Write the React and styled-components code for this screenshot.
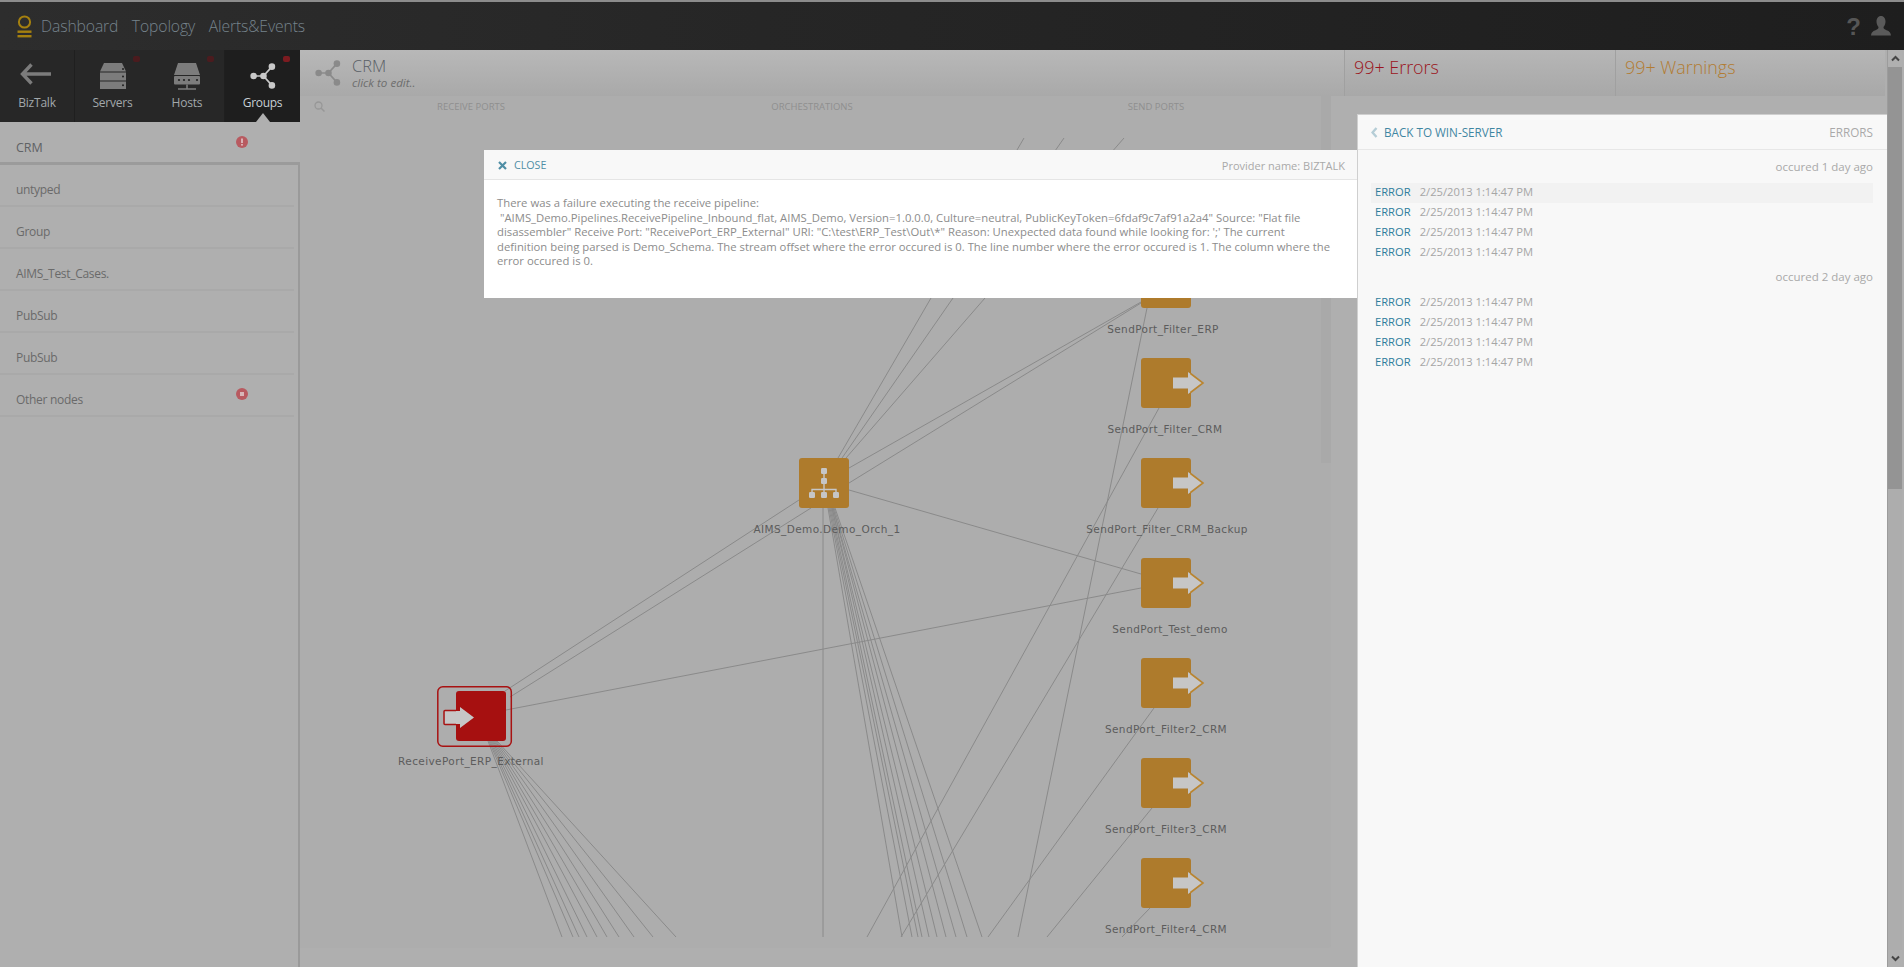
import React from "react";
import styled, { createGlobalStyle } from "styled-components";

const Global = createGlobalStyle`
  html, body { margin: 0; padding: 0; height: 100%; overflow: hidden; background: #afafaf; }
  body { font-family: "Open Sans", "Liberation Sans", sans-serif; }
  * { box-sizing: border-box; }
`;

const Page = styled.div`
  position: relative; width: 1904px; height: 967px; display: flex; flex-direction: column; overflow: hidden; background: #afafaf;
`;

/* header */
const Header = styled.header`
  height: 50px; flex: none; display: flex; align-items: center; padding: 0 13px 0 17px;
  border-top: 2px solid #8c8c8c;
  background: linear-gradient(90deg, #2d2d2d 0%, #262626 40%, #1e1e1e 100%);
`;
const Logo = styled.svg` width: 15px; height: 23px; margin-right: 9px; flex: none; `;
const TopNav = styled.nav` display: flex; gap: 13.5px; flex: 1; `;
const TopLink = styled.span`
  font-size: 15.7px; font-weight: 300; color: #76838c; letter-spacing: -0.1px; line-height: 24px;
`;
const HeaderIcons = styled.div` display: flex; align-items: center; gap: 10px; `;
const HelpMark = styled.span`
  font-family: "Liberation Sans", sans-serif; font-size: 24px; font-weight: 700; color: #565656; line-height: 26px; padding-top: 2px;
`;

const Body = styled.div` flex: 1; display: flex; min-height: 0; `;

/* left */
const Sidebar = styled.aside` width: 300px; flex: none; display: flex; flex-direction: column; `;
const Tabs = styled.div` height: 72px; display: flex; flex: none; background: #262626; `;
const Tab = styled.div`
  position: relative; width: 75px; display: flex; flex-direction: column; align-items: center;
  background: ${p => (p.$active ? "#1e1e1e" : "#272727")};
  border-right: ${p => (p.$divider ? "1px solid #1f1f1f" : "none")};
`;
const TabIcon = styled.svg` width: 34px; height: 30px; margin-top: 11px; flex: none; `;
const TabLabel = styled.span`
  margin-top: 3px; font-size: 12px; line-height: 18px; letter-spacing: ${p => (p.$active ? "-0.3px" : "-0.2px")};
  color: ${p => (p.$active ? "#c8d0d4" : "#a2a8ab")};
`;
const TabBadge = styled.i`
  position: absolute; top: 6px; right: 10px; width: 7px; height: 6px; border-radius: 2px;
  background: ${p => (p.$active ? "#7c1b20" : "#4b1b1e")};
`;
const TabPointer = styled.i`
  position: absolute; bottom: 0; left: 50%; margin-left: -7px; width: 0; height: 0;
  border-left: 7px solid transparent; border-right: 7px solid transparent; border-bottom: 9px solid #afafaf;
`;
const ActiveRow = styled.div`
  height: 43px; flex: none; position: relative; display: flex; align-items: center; padding: 11px 0 0 16px;
  border-bottom: 3px solid #9b9b9b;
  font-size: 12.5px; color: #5f6265; letter-spacing: -0.1px;
`;
const RowList = styled.div`
  flex: 1; border-right: 2px solid #9a9a9a; display: flex; flex-direction: column;
`;
const GroupRow = styled.div`
  height: 42px; flex: none; position: relative; display: flex; align-items: center; padding: 8px 0 0 16px;
  margin-right: 4px; border-bottom: 2px solid #a9a9a9;
  font-size: 12px; color: #6a6a6a; letter-spacing: -0.3px;
`;
const Alert = styled.svg` position: absolute; left: 236px; top: ${p => p.$top}px; width: 12px; height: 12px; `;

/* main */
const Main = styled.main` flex: 1; display: flex; flex-direction: column; min-width: 0; `;
const TopBar = styled.div` height: 46px; display: flex; flex: none; margin-right: 2px; `;
const TitleCell = styled.div`
  flex: 1; display: flex; align-items: flex-start; padding: 8px 0 0 13px; gap: 9px;
  background: linear-gradient(180deg, #b8b8b8, #a9a9a9);
`;
const TitleIcon = styled.svg` width: 30px; height: 30px; flex: none; `;
const TitleText = styled.div` display: flex; flex-direction: column; margin-top: -1px; `;
const TitleName = styled.span` font-size: 16.4px; line-height: 18px; font-weight: 300; color: #5a6066; `;
const TitleHint = styled.span` font-size: 11.6px; line-height: 15px; font-style: italic; color: #6e6e6e; `;
const StatCell = styled.div`
  width: ${p => p.$w}px; flex: none; padding: 3px 0 0 9px; border-left: 1px solid #a0a0a0;
  background: linear-gradient(180deg, #b6b6b6, #a8a8a8);
  font-size: 17.9px; font-weight: 300; line-height: 28px; color: ${p => p.$color};
`;
const Canvas = styled.section`
  position: relative; width: 1031px; height: 852px; flex: none; background: #adadad; border-radius: 0 0 3px 0;
`;
const ColumnHeads = styled.div`
  position: relative; height: 24px; font-size: 9.5px; line-height: 22px; color: #8f8f8f;
`;
const ColumnHead = styled.span` position: absolute; left: ${p => p.$cx - 300}px; transform: translateX(-50%); white-space: nowrap; `;
const SearchIcon = styled.svg` position: absolute; left: 14px; top: 5px; width: 11px; height: 11px; `;
const Edges = styled.svg` position: absolute; left: 0; top: 0; width: 1031px; height: 852px; `;
const NodeIcon = styled.svg`
  position: absolute; left: ${p => p.$x - 300}px; top: ${p => p.$y - 96}px; overflow: visible;
`;
const NodeLabel = styled.span`
  position: absolute; left: ${p => p.$cx - 300}px; top: ${p => p.$y - 96 - 8}px; transform: translateX(-50%);
  font-family: "DejaVu Sans", sans-serif; font-size: 10.5px; letter-spacing: 0.4px; line-height: 16px; color: #5c5c5c; white-space: nowrap;
`;
const CanvasScroll = styled.div`
  position: absolute; right: 0; top: 0; width: 10px; height: 367px; background: #a9a9a9;
`;

const ScrollBar = styled.div`
  width: 15px; flex: none; margin-right: 2px; display: flex; flex-direction: column; background: #adadad; border-left: 1px solid #9c9c9c;
`;
const ScrollBtn = styled.div` height: 17px; flex: none; display: flex; align-items: center; justify-content: center; background: #b0b0b0; `;
const ScrollThumb = styled.div` height: 422px; flex: none; background: #949494; `;
const ScrollRest = styled.div` flex: 1; `;

/* overlays */
const Modal = styled.div`
  position: absolute; left: 484px; top: 150px; width: 874px; height: 148px; background: #fff; display: flex; flex-direction: column;
`;
const ModalHead = styled.div`
  height: 30px; flex: none; display: flex; align-items: center; justify-content: space-between; padding: 1px 13px 0 14px;
  background: #f8f8f8; border-bottom: 1px solid #e5e5e5;
`;
const CloseLink = styled.span`
  display: flex; align-items: center; gap: 7px; font-size: 10.7px; color: #4f8ea5; font-weight: 400;
`;
const ProviderName = styled.span` font-size: 11px; color: #a9a9a9; `;
const ModalBody = styled.div` padding: 16px 13px 0; font-size: 11.3px; line-height: 14.6px; color: #8c8c8c; `;
const BodyLine = styled.div` white-space: pre; `;
const Panel = styled.aside`
  position: absolute; left: 1357px; top: 114px; width: 530px; bottom: 0; background: #f8f8f8; border: 1px solid #cfcfcf; border-bottom: 0; border-right: 0;
  display: flex; flex-direction: column;
`;
const PanelHead = styled.div`
  height: 35px; flex: none; display: flex; align-items: center; justify-content: space-between; padding: 0 14px 0 13px; border-bottom: 1px solid #e7e7e7;
`;
const BackLink = styled.span` display: flex; align-items: center; gap: 6px; font-size: 11.7px; color: #3f86a2; `;
const PanelTag = styled.span` font-size: 11.7px; color: #a9a9a9; `;
const PanelBody = styled.div` padding: 3px 14px 0 13px; `;
const Occurred = styled.div` height: 30px; line-height: 28px; text-align: right; font-size: 11.5px; color: #a9a9a9; `;
const ErrorRow = styled.div`
  height: 20px; display: flex; align-items: center; gap: 9px; padding: 0 0 3px 4px; font-size: 11.2px;
  background: ${p => (p.$hover ? "#f2f2f2" : "transparent")};
`;
const ErrorTag = styled.span` color: #2f7d9c; `;
const ErrorDate = styled.span` color: #a6a6a6; `;

const sendNodes = [
  { y: 258, name: "SendPort_Filter_ERP", cx: 1163 },
  { y: 358, name: "SendPort_Filter_CRM", cx: 1165 },
  { y: 458, name: "SendPort_Filter_CRM_Backup", cx: 1167 },
  { y: 558, name: "SendPort_Test_demo", cx: 1170 },
  { y: 658, name: "SendPort_Filter2_CRM", cx: 1166 },
  { y: 758, name: "SendPort_Filter3_CRM", cx: 1166 },
  { y: 858, name: "SendPort_Filter4_CRM", cx: 1166 },
];

const receiveFan = [[562, 488], [573, 489], [579, 490], [587, 491], [597, 492], [607, 493], [619, 494], [634, 495], [653, 496], [676, 497]];
const orchFan = [[902, 828], [912, 829], [918, 830], [922, 831], [929, 832], [937, 832], [946, 833], [956, 833], [967, 834], [982, 835]];
const straight = [
  [505, 691, 799, 500], [510, 697, 811, 508], [506, 710, 1141, 588], [849, 490, 1141, 574],
  [849, 468, 1141, 302], [849, 483, 1141, 303], [838, 458, 1024, 138], [842, 458, 1064, 138], [846, 458, 1124, 138],
  [823, 508, 823, 937], [1147, 308, 1018, 937], [1159, 408, 867, 937], [1158, 508, 901, 937],
  [1154, 708, 988, 937], [1152, 808, 1047, 937], [1150, 908, 1122, 937],
];

const SendIcon = ({ y }) => (
  <NodeIcon $x={1141} $y={y} width="63" height="50" viewBox="0 0 63 50">
    <rect width="50" height="50" rx="3" fill="#ae7b2c" />
    <path d="M32 19.5H47V14L62 25 47 36V30.5H32Z" fill="#c6c6c6" />
    <path d="M49.5 15.5L62 25 49.5 34.5" fill="none" stroke="#ba8530" strokeWidth="1.6" />
  </NodeIcon>
);

const OrchIcon = () => (
  <NodeIcon $x={799} $y={458} width="50" height="50" viewBox="0 0 50 50">
    <rect width="50" height="50" rx="3" fill="#ae7b2c" />
    <g fill="#c6c6c6">
      <rect x="22" y="10" width="6" height="6" rx="1.2" />
      <rect x="22" y="20" width="6" height="6" rx="1.2" />
      <rect x="10" y="34" width="6" height="6" rx="1.2" />
      <rect x="22" y="34" width="6" height="6" rx="1.2" />
      <rect x="34" y="34" width="6" height="6" rx="1.2" />
    </g>
    <path d="M25 14V35M13 35V31.5H37V35" fill="none" stroke="#c6c6c6" strokeWidth="1.4" />
  </NodeIcon>
);

const ReceiveIcon = () => (
  <NodeIcon $x={437} $y={686} width="76" height="62" viewBox="0 0 76 62">
    <rect x="0.8" y="0.8" width="73.5" height="59.5" rx="5" fill="none" stroke="#a81212" strokeWidth="1.5" />
    <rect x="19" y="5" width="50" height="50" rx="3" fill="#a61010" />
    <path d="M7.5 25H23V21L37 31.5 23 42V38H7.5Z" fill="#c6c6c6" />
    <path d="M19 24.5H8Q7 24.5 7 25.5V37.5Q7 38.5 8 38.5H19" fill="none" stroke="#a81212" strokeWidth="1.5" />
  </NodeIcon>
);

const ServerGlyph = () => (
  <TabIcon viewBox="0 0 34 30">
    <path d="M8 2H26L30 10.500H4Z" fill="#7c7c7c" />
    <rect x="4" y="11.500" width="26" height="8" fill="#7c7c7c" />
    <rect x="4" y="20.500" width="26" height="7.500" fill="#7c7c7c" />
    <g fill="#222"><circle cx="27" cy="8" r="1" /><circle cx="27" cy="15.500" r="1" /><circle cx="27" cy="24.200" r="1" /></g>
  </TabIcon>
);
const HostGlyph = () => (
  <TabIcon viewBox="0 0 34 30">
    <path d="M8 2H26L30 14H4Z" fill="#7c7c7c" />
    <path d="M5 15H29Q30 15 30 16V22.500Q30 23.500 29 23.500H5Q4 23.500 4 22.500V16Q4 15 5 15Z" fill="#7c7c7c" />
    <g fill="#222"><circle cx="9" cy="19" r="1.100" /><circle cx="14" cy="19" r="1.100" /><circle cx="19" cy="19" r="1.100" /><circle cx="27" cy="19" r="1.100" /></g>
    <path d="M17 23.500V27.500M8 28H26" stroke="#7c7c7c" strokeWidth="1.600" />
  </TabIcon>
);
const ShareGlyph = ({ color }) => (
  <>
    <path d="M4 16H14.5L23.5 6M14.5 16L23.5 26" fill="none" stroke={color} strokeWidth="1.8" />
    <circle cx="4" cy="16" r="3.5" fill={color} />
    <circle cx="14.5" cy="16" r="3.5" fill={color} />
    <circle cx="23.5" cy="6" r="3.5" fill={color} />
    <circle cx="23.5" cy="26" r="3.5" fill={color} />
  </>
);

const Chevron = ({ up }) => (
  <svg width="9" height="7" viewBox="0 0 9 7">
    <path d={up ? "M1 5.5L4.5 2 8 5.5" : "M1 1.5L4.5 5 8 1.5"} fill="none" stroke="#454545" strokeWidth="2" />
  </svg>
);

const bodyLines = [
  "There was a failure executing the receive pipeline:",
  ' "AIMS_Demo.Pipelines.ReceivePipeline_Inbound_flat, AIMS_Demo, Version=1.0.0.0, Culture=neutral, PublicKeyToken=6fdaf9c7af91a2a4" Source: "Flat file',
  'disassembler" Receive Port: "ReceivePort_ERP_External" URI: "C:\\test\\ERP_Test\\Out\\*" Reason: Unexpected data found while looking for: \';\' The current',
  "definition being parsed is Demo_Schema. The stream offset where the error occured is 0. The line number where the error occured is 1. The column where the",
  "error occured is 0.",
];

const errs = [0, 1, 2, 3];

export default function App() {
  return (
    <Page>
      <Global />
      <Header>
        <Logo viewBox="0 0 15 23">
          <circle cx="7.5" cy="7" r="5.6" fill="none" stroke="#a5800f" strokeWidth="2" />
          <rect x="0.5" y="15.5" width="14" height="2.4" fill="#a5800f" />
          <rect x="0.5" y="20" width="14" height="2.4" fill="#a5800f" />
        </Logo>
        <TopNav>
          <TopLink>Dashboard</TopLink>
          <TopLink>Topology</TopLink>
          <TopLink>Alerts&amp;Events</TopLink>
        </TopNav>
        <HeaderIcons>
          <HelpMark>?</HelpMark>
          <svg width="20" height="20" viewBox="0 0 20 20">
            <path d="M10 0C13 0 14.5 2.500 14.500 5.500C14.500 8 13.500 10 12.500 11C12.500 12.500 13 13 15 14C18 15.200 19.500 16 20 19.500H0C.5 16 2 15.200 5 14C7 13 7.500 12.500 7.500 11C6.500 10 5.500 8 5.500 5.500C5.500 2.500 7 0 10 0Z" fill="#5a5a5a" />
          </svg>
        </HeaderIcons>
      </Header>
      <Body>
        <Sidebar>
          <Tabs>
            <Tab $divider>
              <TabIcon viewBox="0 0 34 30">
                <path d="M3 13H31M11.500 3.500L2.500 13 11.500 22.500" fill="none" stroke="#7c7c7c" strokeWidth="3.400" />
              </TabIcon>
              <TabLabel>BizTalk</TabLabel>
            </Tab>
            <Tab>
              <ServerGlyph />
              <TabLabel>Servers</TabLabel>
              <TabBadge />
            </Tab>
            <Tab $divider>
              <HostGlyph />
              <TabLabel>Hosts</TabLabel>
              <TabBadge />
            </Tab>
            <Tab $active>
              <TabIcon viewBox="0 0 28 32"><ShareGlyph color="#c9c9c9" /></TabIcon>
              <TabLabel $active>Groups</TabLabel>
              <TabBadge $active />
              <TabPointer />
            </Tab>
          </Tabs>
          <ActiveRow>
            CRM
            <Alert $top={14} viewBox="0 0 12 12">
              <circle cx="6" cy="6" r="6" fill="#b85a60" />
              <rect x="5.200" y="2.500" width="1.600" height="4.500" fill="#e2c8ca" />
              <rect x="5.200" y="8" width="1.600" height="1.600" fill="#e2c8ca" />
            </Alert>
          </ActiveRow>
          <RowList>
            <GroupRow>untyped</GroupRow>
            <GroupRow>Group</GroupRow>
            <GroupRow>AIMS_Test_Cases.</GroupRow>
            <GroupRow>PubSub</GroupRow>
            <GroupRow>PubSub</GroupRow>
            <GroupRow>
              Other nodes
              <Alert $top={13} viewBox="0 0 12 12">
                <circle cx="6" cy="6" r="6" fill="#b85a60" />
                <rect x="4" y="4" width="4" height="4" fill="#d8b6b8" />
              </Alert>
            </GroupRow>
          </RowList>
        </Sidebar>
        <Main>
          <TopBar>
            <TitleCell>
              <TitleIcon viewBox="0 0 28 32"><ShareGlyph color="#8a8a8a" /></TitleIcon>
              <TitleText>
                <TitleName>CRM</TitleName>
                <TitleHint>click to edit..</TitleHint>
              </TitleText>
            </TitleCell>
            <StatCell $w={271} $color="#9b1420">99+ Errors</StatCell>
            <StatCell $w={270} $color="#b27c32">99+ Warnings</StatCell>
          </TopBar>
          <Canvas>
            <ColumnHeads>
              <SearchIcon viewBox="0 0 11 11">
                <circle cx="4.500" cy="4.500" r="3.500" fill="none" stroke="#979797" strokeWidth="1.300" />
                <path d="M7 7L10.500 10.500" stroke="#979797" strokeWidth="1.500" />
              </SearchIcon>
              <ColumnHead $cx={471}>RECEIVE PORTS</ColumnHead>
              <ColumnHead $cx={812}>ORCHESTRATIONS</ColumnHead>
              <ColumnHead $cx={1156}>SEND PORTS</ColumnHead>
            </ColumnHeads>
            <CanvasScroll />
            <Edges viewBox="300 96 1031 852">
              <g stroke="#8a8a8a" strokeWidth="1" fill="none">
                {straight.map(([a, b, c, d], i) => <line key={i} x1={a} y1={b} x2={c} y2={d} />)}
                {receiveFan.map(([x, o], i) => <line key={i} x1={o} y1={741} x2={x} y2={937} />)}
                {orchFan.map(([x, o], i) => <line key={i} x1={o} y1={508} x2={x} y2={937} />)}
              </g>
            </Edges>
            {sendNodes.map(n => <SendIcon key={n.name} y={n.y} />)}
            {sendNodes.map(n => <NodeLabel key={n.name} $cx={n.cx} $y={n.y + 71}>{n.name}</NodeLabel>)}
            <OrchIcon />
            <NodeLabel $cx={827} $y={529}>AIMS_Demo.Demo_Orch_1</NodeLabel>
            <ReceiveIcon />
            <NodeLabel $cx={471} $y={761}>ReceivePort_ERP_External</NodeLabel>
          </Canvas>
        </Main>
        <ScrollBar>
          <ScrollBtn><Chevron up /></ScrollBtn>
          <ScrollThumb />
          <ScrollRest />
          <ScrollBtn><Chevron /></ScrollBtn>
        </ScrollBar>
      </Body>
      <Modal>
        <ModalHead>
          <CloseLink>
            <svg width="9" height="9" viewBox="0 0 9 9"><path d="M1 1L8 8M8 1L1 8" stroke="#4f8ea5" strokeWidth="2.200" /></svg>
            CLOSE
          </CloseLink>
          <ProviderName>Provider name: BIZTALK</ProviderName>
        </ModalHead>
        <ModalBody>
          {bodyLines.map((l, i) => <BodyLine key={i}>{l}</BodyLine>)}
        </ModalBody>
      </Modal>
      <Panel>
        <PanelHead>
          <BackLink>
            <svg width="7" height="11" viewBox="0 0 7 11"><path d="M5.500 1L1.500 5.500 5.500 10" fill="none" stroke="#b5cdd6" strokeWidth="2.400" /></svg>
            BACK TO WIN-SERVER
          </BackLink>
          <PanelTag>ERRORS</PanelTag>
        </PanelHead>
        <PanelBody>
          <Occurred>occured 1 day ago</Occurred>
          {errs.map(i => (
            <ErrorRow key={i} $hover={i === 0}><ErrorTag>ERROR</ErrorTag><ErrorDate>2/25/2013 1:14:47 PM</ErrorDate></ErrorRow>
          ))}
          <Occurred>occured 2 day ago</Occurred>
          {errs.map(i => (
            <ErrorRow key={i}><ErrorTag>ERROR</ErrorTag><ErrorDate>2/25/2013 1:14:47 PM</ErrorDate></ErrorRow>
          ))}
        </PanelBody>
      </Panel>
    </Page>
  );
}
